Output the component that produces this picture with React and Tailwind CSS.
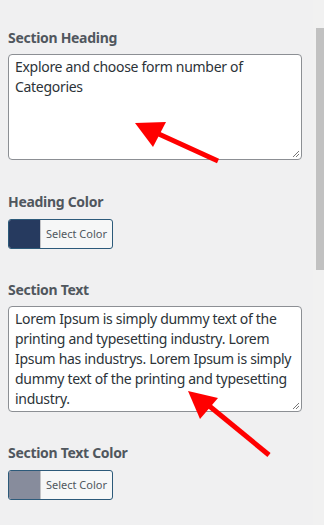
import React from 'react';

const font = { fontFamily: '"Noto Sans", "Open Sans", sans-serif' };

// Label above each field
const Label = ({ children }) => (
  <div className="text-[14px] font-bold tracking-[-0.3px] text-[#50575e] leading-[20px]">{children}</div>
);

// Textarea-like box with a resize grip in the corner
const TextBox = ({ text }) => (
  <div className="relative mt-[6px] h-[106px] w-[294px] rounded-[4px] border border-[#8c8f94] bg-white px-[6px] py-[2px] text-[14px] tracking-[-0.3px] leading-[20px] text-[#2c3338]">
    {text}
    <svg className="absolute bottom-[1px] right-[1px]" width="8" height="8" viewBox="0 0 8 8">
      <path d="M7 1 L1 7 M7 4 L4 7" stroke="#777" strokeWidth="1" />
    </svg>
  </div>
);

const ColorButton = ({ color }) => (
  <div className="mt-[7px] flex h-[30px] w-[105px] overflow-hidden rounded-[3px] border border-[#2c5a7a] bg-[#f6f7f7]">
    <div className="h-full w-[31px]" style={{ backgroundColor: color }} />
    <div className="flex flex-1 items-center justify-center border-l border-[#c3c4c7] text-[11px] text-[#50575e]">
      Select Color
    </div>
  </div>
);

export default function App() {
  return (
    <div className="relative flex h-[525px] w-[324px] overflow-hidden bg-[#f0f0f1]" style={font}>
      <div className="flex-1 pl-[8px] pt-[28px]">
        <Label>Section Heading</Label>
        <TextBox text="Explore and choose form number of Categories" />

        <div className="mt-[32px]">
          <Label>Heading Color</Label>
          <ColorButton color="#263a5f" />
        </div>

        <div className="mt-[31px]">
          <Label>Section Text</Label>
          <TextBox text="Lorem Ipsum is simply dummy text of the printing and typesetting industry. Lorem Ipsum has industrys. Lorem Ipsum is simply dummy text of the printing and typesetting industry." />
        </div>

        <div className="mt-[31px]">
          <Label>Section Text Color</Label>
          <ColorButton color="#878c9c" />
        </div>
      </div>

      {/* scrollbar */}
      <div className="w-[11px] bg-[#f1f1f1] pt-[28px] pl-[3px]">
        <div className="h-[242px] w-[8px] bg-[#c1c1c1]" />
      </div>

      {/* annotation arrows */}
      <svg className="pointer-events-none absolute left-0 top-0" width="324" height="525">
        <line x1="218" y1="161" x2="150" y2="130" stroke="#f00" strokeWidth="5" />
        <polygon points="135,123 166,122 153,147" fill="#f00" />
        <line x1="269" y1="455" x2="202" y2="400" stroke="#f00" strokeWidth="5" />
        <polygon points="188,391 218,398 200,419" fill="#f00" />
      </svg>
    </div>
  );
}
